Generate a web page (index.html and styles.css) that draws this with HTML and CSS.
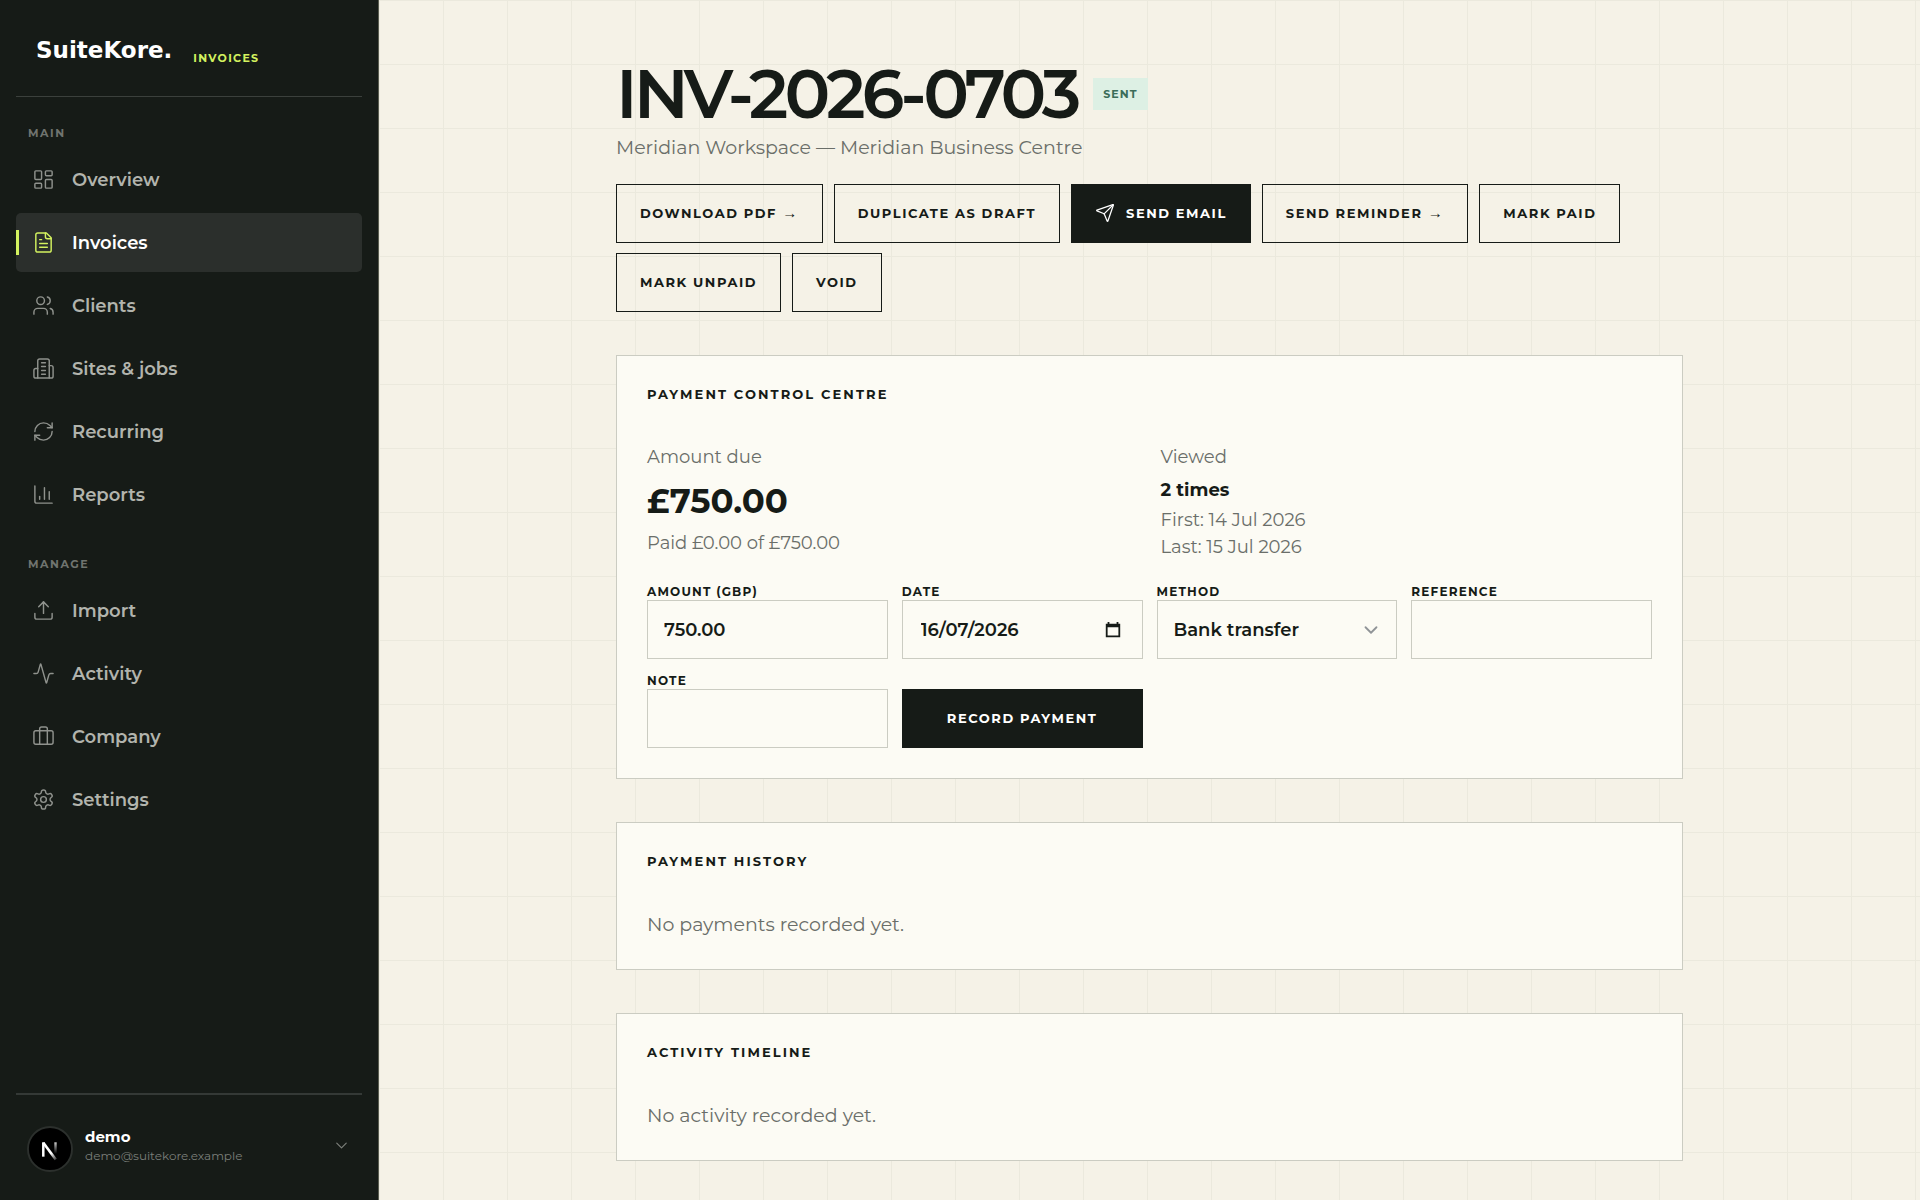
FILE: index.html
```
<!DOCTYPE html>
<html lang="en-GB">
<head>
  <meta charset="UTF-8">
  <meta name="viewport" content="width=device-width, initial-scale=1">
  <title>INV-2026-0703 – SuiteKore Invoices</title>
  <link rel="stylesheet" href="styles.css">
</head>
<body>
  <div class="app">
    <aside class="sidebar">
      <a class="brand" href="#">
        <span class="brand-name">SuiteKore.</span>
        <span class="brand-product">Invoices</span>
      </a>

      <nav class="nav">
        <div class="nav-label">Main</div>
        <a class="nav-item" href="#">
          <svg class="icon" viewBox="0 0 24 24"><rect x="3" y="3" width="7" height="9" rx="1"/><rect x="14" y="3" width="7" height="5" rx="1"/><rect x="14" y="12" width="7" height="9" rx="1"/><rect x="3" y="16" width="7" height="5" rx="1"/></svg>
          Overview
        </a>
        <a class="nav-item active" href="#" aria-current="page">
          <svg class="icon" viewBox="0 0 24 24"><path d="M15 2H6a2 2 0 0 0-2 2v16a2 2 0 0 0 2 2h12a2 2 0 0 0 2-2V7Z"/><path d="M14 2v4a2 2 0 0 0 2 2h4"/><path d="M10 9H8"/><path d="M16 13H8"/><path d="M16 17H8"/></svg>
          Invoices
        </a>
        <a class="nav-item" href="#">
          <svg class="icon" viewBox="0 0 24 24"><path d="M16 21v-2a4 4 0 0 0-4-4H6a4 4 0 0 0-4 4v2"/><circle cx="9" cy="7" r="4"/><path d="M22 21v-2a4 4 0 0 0-3-3.87"/><path d="M16 3.13a4 4 0 0 1 0 7.75"/></svg>
          Clients
        </a>
        <a class="nav-item" href="#">
          <svg class="icon" viewBox="0 0 24 24"><path d="M6 22V4a2 2 0 0 1 2-2h8a2 2 0 0 1 2 2v18Z"/><path d="M6 12H4a2 2 0 0 0-2 2v6a2 2 0 0 0 2 2h2"/><path d="M18 9h2a2 2 0 0 1 2 2v9a2 2 0 0 1-2 2h-2"/><path d="M10 6h4"/><path d="M10 10h4"/><path d="M10 14h4"/><path d="M10 18h4"/></svg>
          Sites &amp; jobs
        </a>
        <a class="nav-item" href="#">
          <svg class="icon" viewBox="0 0 24 24"><path d="M3 12a9 9 0 0 1 9-9 9.75 9.75 0 0 1 6.74 2.74L21 8"/><path d="M21 3v5h-5"/><path d="M21 12a9 9 0 0 1-9 9 9.75 9.75 0 0 1-6.74-2.74L3 16"/><path d="M8 16H3v5"/></svg>
          Recurring
        </a>
        <a class="nav-item" href="#">
          <svg class="icon" viewBox="0 0 24 24"><path d="M3 3v16a2 2 0 0 0 2 2h16"/><path d="M18 17V9"/><path d="M13 17V5"/><path d="M8 17v-3"/></svg>
          Reports
        </a>

        <div class="nav-label">Manage</div>
        <a class="nav-item" href="#">
          <svg class="icon" viewBox="0 0 24 24"><path d="M12 3v12"/><path d="m17 8-5-5-5 5"/><path d="M21 15v4a2 2 0 0 1-2 2H5a2 2 0 0 1-2-2v-4"/></svg>
          Import
        </a>
        <a class="nav-item" href="#">
          <svg class="icon" viewBox="0 0 24 24"><path d="M22 12h-2.48a2 2 0 0 0-1.93 1.46l-2.35 8.36a.25.25 0 0 1-.48 0L9.24 2.18a.25.25 0 0 0-.48 0l-2.35 8.36A2 2 0 0 1 4.49 12H2"/></svg>
          Activity
        </a>
        <a class="nav-item" href="#">
          <svg class="icon" viewBox="0 0 24 24"><path d="M16 20V4a2 2 0 0 0-2-2h-4a2 2 0 0 0-2 2v16"/><rect width="20" height="14" x="2" y="6" rx="2"/></svg>
          Company
        </a>
        <a class="nav-item" href="#">
          <svg class="icon" viewBox="0 0 24 24"><path d="M12.22 2h-.44a2 2 0 0 0-2 2v.18a2 2 0 0 1-1 1.73l-.43.25a2 2 0 0 1-2 0l-.15-.08a2 2 0 0 0-2.73.73l-.22.38a2 2 0 0 0 .73 2.73l.15.1a2 2 0 0 1 1 1.72v.51a2 2 0 0 1-1 1.74l-.15.09a2 2 0 0 0-.73 2.73l.22.38a2 2 0 0 0 2.73.73l.15-.08a2 2 0 0 1 2 0l.43.25a2 2 0 0 1 1 1.73V20a2 2 0 0 0 2 2h.44a2 2 0 0 0 2-2v-.18a2 2 0 0 1 1-1.73l.43-.25a2 2 0 0 1 2 0l.15.08a2 2 0 0 0 2.73-.73l.22-.39a2 2 0 0 0-.73-2.73l-.15-.08a2 2 0 0 1-1-1.74v-.5a2 2 0 0 1 1-1.74l.15-.09a2 2 0 0 0 .73-2.73l-.22-.38a2 2 0 0 0-2.73-.73l-.15.08a2 2 0 0 1-2 0l-.43-.25a2 2 0 0 1-1-1.73V4a2 2 0 0 0-2-2z"/><circle cx="12" cy="12" r="3"/></svg>
          Settings
        </a>
      </nav>

      <div class="account">
        <button class="account-button" type="button">
          <svg class="avatar" viewBox="0 0 48 48" aria-hidden="true">
            <defs>
              <linearGradient id="fade" gradientUnits="userSpaceOnUse" x1="0" y1="17" x2="0" y2="29">
                <stop offset="0" stop-color="#fff" stop-opacity="0.8"/>
                <stop offset="1" stop-color="#fff" stop-opacity="0"/>
              </linearGradient>
              <linearGradient id="tail" gradientUnits="userSpaceOnUse" x1="26" y1="28" x2="31" y2="35">
                <stop offset="0" stop-color="#fff"/>
                <stop offset="1" stop-color="#fff" stop-opacity="0.2"/>
              </linearGradient>
            </defs>
            <circle cx="24" cy="24" r="23" fill="#000" stroke="#2c302d" stroke-width="2"/>
            <line x1="17" y1="17" x2="17" y2="32" stroke="#fff" stroke-width="2.6"/>
            <line x1="17" y1="17.500" x2="30" y2="35" stroke="url(#tail)" stroke-width="2.8"/>
            <rect x="28.500" y="17" width="2.500" height="12" fill="url(#fade)"/>
          </svg>
          <span class="account-text">
            <span class="account-name">demo</span>
            <span class="account-email">demo@suitekore.example</span>
          </span>
          <svg class="chevron" viewBox="0 0 24 24"><path d="m6 9 6 6 6-6"/></svg>
        </button>
      </div>
    </aside>

    <main class="main">
      <div class="content">
        <header class="page-header">
          <div class="title-row">
            <h1>INV-2026-0703</h1>
            <span class="badge">Sent</span>
          </div>
          <p class="subtitle">Meridian Workspace — Meridian Business Centre</p>
          <div class="actions">
            <button class="btn" type="button"><span>Download PDF <span class="arrow">→</span></span></button>
            <button class="btn" type="button">Duplicate as draft</button>
            <button class="btn btn-dark" type="button">
              <svg class="icon-send" viewBox="0 0 24 24"><path d="M14.54 21.69a.5.5 0 0 0 .94-.03l6.5-19a.5.5 0 0 0-.64-.63l-19 6.5a.5.5 0 0 0-.02.93l7.93 3.18a2 2 0 0 1 1.11 1.11z"/><path d="m21.85 2.15-10.94 10.94"/></svg>
              Send email
            </button>
            <button class="btn" type="button"><span>Send reminder <span class="arrow">→</span></span></button>
            <button class="btn" type="button">Mark paid</button>
            <button class="btn" type="button">Mark unpaid</button>
            <button class="btn" type="button">Void</button>
          </div>
        </header>

        <section class="card">
          <h2>Payment control centre</h2>
          <div class="summary">
            <div>
              <p class="muted">Amount due</p>
              <p class="amount">£750.00</p>
              <p class="muted">Paid £0.00 of £750.00</p>
            </div>
            <div>
              <p class="muted">Viewed</p>
              <p class="views">2 times</p>
              <p class="muted">First: 14 Jul 2026</p>
              <p class="muted">Last: 15 Jul 2026</p>
            </div>
          </div>
          <form class="payment-form">
            <div class="field">
              <label for="amount">Amount (GBP)</label>
              <input class="control" id="amount" type="text" inputmode="decimal" value="750.00">
            </div>
            <div class="field">
              <label for="date">Date</label>
              <div class="control date-control">
                <input id="date" type="text" value="16/07/2026">
                <button class="date-button" type="button" aria-label="Open calendar">
                  <svg viewBox="0 0 20 20"><path d="M4 1h2v2h8V1h2v2h2v15H2V3h2zM4 7v9h12V7z" fill="currentColor" fill-rule="evenodd"/></svg>
                </button>
              </div>
            </div>
            <div class="field">
              <label for="method">Method</label>
              <select class="control" id="method">
                <option>Bank transfer</option>
                <option>Card</option>
                <option>Cash</option>
              </select>
            </div>
            <div class="field">
              <label for="reference">Reference</label>
              <input class="control" id="reference" type="text">
            </div>
            <div class="field">
              <label for="note">Note</label>
              <input class="control" id="note" type="text">
            </div>
            <button class="btn btn-dark" type="submit">Record payment</button>
          </form>
        </section>

        <section class="card">
          <h2>Payment history</h2>
          <p class="empty">No payments recorded yet.</p>
        </section>

        <section class="card">
          <h2>Activity timeline</h2>
          <p class="empty">No activity recorded yet.</p>
        </section>
      </div>
    </main>
  </div>
</body>
</html>
```

FILE: styles.css
```
:root {
  --ink: #161b17;
  --paper: #f5f2e7;
  --card: #fcfbf4;
  --line: #cbccc2;
  --muted: #6a6e69;
  --lime: #d3f25f;
}

* {
  box-sizing: border-box;
}

body {
  margin: 0;
  background: var(--paper);
  color: var(--ink);
  font-family: Montserrat, "Liberation Sans", sans-serif;
  font-size: 19px;
}

h1, h2, p {
  margin: 0;
}

button, input, select {
  font: inherit;
  color: inherit;
}

svg {
  flex: none;
}

.app {
  display: flex;
  min-height: 100vh;
}

/* Sidebar */

.sidebar {
  display: flex;
  flex-direction: column;
  flex: none;
  width: 379px;
  height: 100vh;
  padding: 0 16px;
  position: sticky;
  top: 0;
  background: var(--ink);
  border-right: 1px solid #5a5d50;
}

.brand {
  display: flex;
  align-items: flex-start;
  gap: 21px;
  height: 97px;
  padding: 36px 20px 0;
  border-bottom: 1px solid #3b403c;
  text-decoration: none;
}

.brand-name {
  color: #fff;
  font-family: "DejaVu Sans", sans-serif;
  font-size: 23px;
  font-weight: bold;
  line-height: 28px;
}

.brand-product {
  padding-top: 16px;
  color: var(--lime);
  font-size: 11px;
  font-weight: 700;
  letter-spacing: 0.12em;
  line-height: 12px;
  text-transform: uppercase;
}

.nav {
  display: flex;
  flex-direction: column;
  flex: 1;
  gap: 4px;
}

.nav-label {
  padding: 28px 12px 5px;
  color: #70746f;
  font-size: 11px;
  font-weight: 700;
  letter-spacing: 0.14em;
  line-height: 16px;
  text-transform: uppercase;
}

.nav-item {
  display: flex;
  align-items: center;
  gap: 17px;
  height: 59px;
  padding: 0 16px;
  border-radius: 5px;
  position: relative;
  color: #b2b4ad;
  font-size: 18px;
  font-weight: 600;
  text-decoration: none;
}

.nav-item.active {
  background: #2b2f2c;
  color: #fff;
}

.nav-item.active::before {
  content: "";
  position: absolute;
  left: 0;
  top: 17px;
  width: 3px;
  height: 25px;
  background: var(--lime);
}

.icon, .icon-send, .chevron {
  width: 23px;
  height: 23px;
  fill: none;
  stroke: currentColor;
  stroke-width: 1.5;
  stroke-linecap: round;
  stroke-linejoin: round;
}

.icon {
  color: #8f928d;
}

.active .icon {
  color: var(--lime);
}

.account {
  padding: 24px 11px 28px;
  border-top: 2px solid #343936;
}

.account-button {
  display: flex;
  align-items: center;
  width: 100%;
  padding: 0;
  border: 0;
  background: none;
  text-align: left;
}

.avatar {
  width: 46px;
  height: 46px;
  margin-top: 7px;
}

.account-text {
  display: flex;
  flex: 1;
  flex-direction: column;
  padding-left: 12px;
}

.account-name {
  color: #fff;
  font-size: 15px;
  font-weight: 700;
  line-height: 20px;
}

.account-email {
  color: #7b7f7a;
  font-size: 12px;
  line-height: 18px;
}

.chevron {
  width: 19px;
  height: 19px;
  color: #7b7f7a;
}

/* Page */

.main {
  flex: 1;
  min-width: 0;
  padding: 59px 48px 40px;
  background-image:
    linear-gradient(#ebe9dd 1px, transparent 1px),
    linear-gradient(90deg, #ebe9dd 1px, transparent 1px);
  background-size: 64px 64px;
}

.content {
  display: flex;
  flex-direction: column;
  gap: 43px;
  max-width: 1067px;
  margin: 0 auto;
}

.title-row {
  display: flex;
  align-items: center;
  gap: 16px;
}

h1 {
  font-size: 68px;
  font-weight: 600;
  letter-spacing: -4px;
  line-height: 70px;
}

.badge {
  padding: 8px 10px;
  background: #ddf0e4;
  color: #3b6d59;
  font-size: 11px;
  font-weight: 700;
  letter-spacing: 0.1em;
  line-height: 16px;
  text-transform: uppercase;
}

.subtitle {
  padding: 5px 0 22px;
  color: var(--muted);
  line-height: 28px;
}

.actions {
  display: flex;
  flex-wrap: wrap;
  gap: 10px 11px;
}

.btn {
  display: flex;
  align-items: center;
  justify-content: center;
  gap: 11px;
  height: 59px;
  padding: 0 23px 2px;
  border: 1px solid var(--ink);
  background: transparent;
  font-size: 13px;
  font-weight: 700;
  letter-spacing: 0.12em;
  text-transform: uppercase;
}

.btn-dark {
  background: var(--ink);
  color: #fff;
}

.arrow {
  font-family: "Liberation Sans", sans-serif;
  font-size: 15px;
  line-height: 1;
}

.icon-send {
  width: 20px;
  height: 20px;
}

/* Cards */

.card {
  padding: 30px;
  background: var(--card);
  border: 1px solid var(--line);
}

h2 {
  padding-bottom: 36px;
  font-size: 13px;
  font-weight: 700;
  letter-spacing: 0.16em;
  line-height: 16px;
  text-transform: uppercase;
}

.summary {
  display: grid;
  grid-template-columns: 1fr 1fr;
  gap: 22px;
  padding: 6px 0 23px;
}

.muted {
  color: var(--muted);
  font-size: 18px;
  line-height: 27px;
}

.amount {
  padding: 8px 0 7px;
  font-size: 34px;
  font-weight: 700;
  line-height: 44px;
}

.views {
  padding: 4px 0 2px;
  font-size: 18px;
  font-weight: 700;
  line-height: 30px;
}

.payment-form {
  display: grid;
  grid-template-columns: repeat(4, minmax(0, 1fr));
  align-items: end;
  gap: 14px;
}

.field label {
  display: block;
  font-size: 12px;
  font-weight: 700;
  letter-spacing: 0.1em;
  line-height: 16px;
  text-transform: uppercase;
}

.control {
  width: 100%;
  height: 59px;
  padding: 0 16px;
  border: 1px solid var(--line);
  border-radius: 0;
  background-color: transparent;
  font-size: 18px;
  font-weight: 600;
}

.date-control {
  display: flex;
  align-items: center;
}

.date-control input {
  flex: 1;
  min-width: 0;
  padding: 0 2px;
  border: 0;
  background: none;
}

.date-button {
  display: flex;
  padding: 0 4px;
  border: 0;
  background: none;
}

.date-button svg {
  width: 18px;
  height: 18px;
}

select.control {
  appearance: none;
  background-image: url("data:image/svg+xml,%3Csvg xmlns='http://www.w3.org/2000/svg' viewBox='0 0 24 24' fill='none' stroke='%23909497' stroke-width='2' stroke-linecap='round' stroke-linejoin='round'%3E%3Cpath d='m6 9 6 6 6-6'/%3E%3C/svg%3E");
  background-repeat: no-repeat;
  background-position: right 14px center;
  background-size: 22px 22px;
}

.empty {
  padding-top: 6px;
  color: var(--muted);
  line-height: 28px;
}
```
